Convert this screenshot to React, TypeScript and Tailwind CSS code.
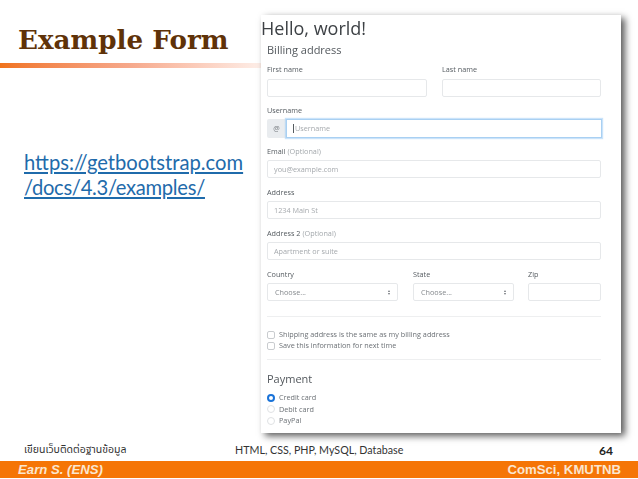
const sans = "font-['Open_Sans','Noto_Sans',sans-serif]";

function Label({ text, optional }: { text: string; optional?: boolean }) {
  return (
    <div className="h-[9px] flex items-center whitespace-nowrap text-[7.25px] leading-none text-[#555b60]">
      {text}
      {optional && <span className="ml-[2px] text-[#a3a8ac]">(Optional)</span>}
    </div>
  );
}

function Input({ placeholder, tight }: { placeholder?: string; tight?: boolean }) {
  return (
    <div className={`${tight ? "mt-[4px]" : "mt-[5px]"} h-[18px] flex items-center rounded-[2px] border border-[#e6e8ea] bg-white pl-[6px] text-[7.25px] text-[#a5a9ad]`}>
      {placeholder}
    </div>
  );
}

function Select() {
  return (
    <div className="mt-[4px] h-[18px] flex items-center justify-between rounded-[2px] border border-[#e6e8ea] bg-white px-[7px] text-[7.25px] text-[#85898d]">
      <span>Choose...</span>
      <span className="flex flex-col gap-[1px]">
        <span className="h-0 w-0 border-x-[1.5px] border-b-[2px] border-x-transparent border-b-[#6d7277]" />
        <span className="h-0 w-0 border-x-[1.5px] border-t-[2px] border-x-transparent border-t-[#6d7277]" />
      </span>
    </div>
  );
}

function CheckRow({ text }: { text: string }) {
  return (
    <div className="h-[11px] flex items-center gap-[4px] text-[7.25px] text-[#6b7075]">
      <span className="h-[8px] w-[8px] rounded-[2px] border border-[#c9cccf] bg-white" />
      {text}
    </div>
  );
}

function RadioRow({ text, checked }: { text: string; checked?: boolean }) {
  return (
    <div className="h-[11.5px] flex items-center gap-[4px] text-[7.25px] text-[#6b7075]">
      {checked ? (
        <span className="h-[8px] w-[8px] rounded-full border-[2.5px] border-[#1a73d8] bg-white" />
      ) : (
        <span className="h-[8px] w-[8px] rounded-full border border-[#dfe1e3] bg-white" />
      )}
      {text}
    </div>
  );
}

function FormCard() {
  return (
    <div className={`mt-[15px] h-[418px] w-[360px] bg-white shadow-[4px_3px_7px_rgba(0,0,0,0.65)] ${sans}`}>
      <div className="blur-[0.4px]">
        <div className="h-[27px] text-[18px] leading-[26px] text-[#3d4145]">Hello, world!</div>
        <div className="px-[6px] pr-[20px]">
          <div className="h-[18px] text-[11px] leading-[16px] text-[#53585d]">Billing address</div>
          <div className="mt-[5px] flex gap-[15px]">
            <div className="w-[160px]">
              <Label text="First name" />
              <Input />
            </div>
            <div className="w-[159px]">
              <Label text="Last name" />
              <Input />
            </div>
          </div>
          <div className="mt-[9px]">
            <Label text="Username" />
            <div className="mt-[4px] flex h-[19px]">
              <div className="w-[19px] flex items-center justify-center rounded-l-[2px] bg-[#e9ecef] text-[7.25px] text-[#777c81]">@</div>
              <div className="-mr-[1px] flex-1 flex items-center border border-[#a9d0f2] bg-white pl-[6px] text-[7.25px] text-[#a5a9ad] shadow-[0_0_1px_1px_rgba(150,200,245,0.5)]">
                <span className="mr-[1px] h-[9px] w-px bg-[#555b60]" />
                Username
              </div>
            </div>
          </div>
          <div className="mt-[9px]">
            <Label text="Email" optional />
            <Input placeholder="you@example.com" tight />
          </div>
          <div className="mt-[10px]">
            <Label text="Address" />
            <Input placeholder="1234 Main St" tight />
          </div>
          <div className="mt-[10px]">
            <Label text="Address 2" optional />
            <Input placeholder="Apartment or suite" tight />
          </div>
          <div className="mt-[10px] flex">
            <div className="w-[131px]">
              <Label text="Country" />
              <Select />
            </div>
            <div className="ml-[15px] w-[101px]">
              <Label text="State" />
              <Select />
            </div>
            <div className="ml-[14px] w-[73px]">
              <Label text="Zip" />
              <Input tight />
            </div>
          </div>
          <div className="mt-[15px] h-px bg-[#eeeff0]" />
          <div className="mt-[12px]">
            <CheckRow text="Shipping address is the same as my billing address" />
            <CheckRow text="Save this information for next time" />
          </div>
          <div className="mt-[8px] h-px bg-[#eeeff0]" />
          <div className="mt-[10px] h-[18px] text-[11px] leading-[18px] text-[#53585d]">Payment</div>
          <div className="mt-[4px]">
            <RadioRow text="Credit card" checked />
            <RadioRow text="Debit card" />
            <RadioRow text="PayPal" />
          </div>
        </div>
      </div>
    </div>
  );
}

export default function App() {
  return (
    <div className="relative h-[479px] w-[638px] overflow-hidden bg-white flex flex-col">
      <div className="h-[433px] flex">
        <div className="w-[261px]">
          <h1 className="ml-[18px] mt-[25px] h-[30px] whitespace-nowrap font-['DejaVu_Serif',serif] text-[26.2px] font-bold leading-[30px] text-[#5f3208]">
            Example Form
          </h1>
          <div className="mt-[8px] h-[5px] bg-gradient-to-r from-[#f0731a] via-[#f6a98c] to-[#fdeee8]" />
          <div className="ml-[24px] mt-[82px] font-['Lato',sans-serif] text-[20.2px] leading-[25px] text-[#1f6bab] underline">
            https://getbootstrap.com
            <br />
            <span className="tracking-[-0.3px]">/docs/4.3/examples/</span>
          </div>
        </div>
        <FormCard />
      </div>
      <div className="mt-[9px] h-[17px] flex items-center pl-[24px] pr-[24px]">
        <span className="w-[211px] font-['Noto_Sans_Thai','Noto_Sans','DejaVu_Sans',sans-serif] text-[10.5px] text-[#333]">เขียนเว็บติดต่อฐานข้อมูล</span>
        <span className="font-['Lato',sans-serif] text-[10.7px] text-[#333]">HTML, CSS, PHP, MySQL, Database</span>
        <span className="ml-auto pr-[1px] font-['Lato',sans-serif] text-[12px] font-bold text-[#222]">64</span>
      </div>
      <div className="mt-[2px] h-[17px] flex items-center justify-between bg-[#f57506] pl-[18px] pr-[17px] font-['Liberation_Sans',sans-serif] text-[13.2px] font-bold text-[#fbe6cf]">
        <span className="italic">Earn S. (ENS)</span>
        <span>ComSci, KMUTNB</span>
      </div>
    </div>
  );
}
